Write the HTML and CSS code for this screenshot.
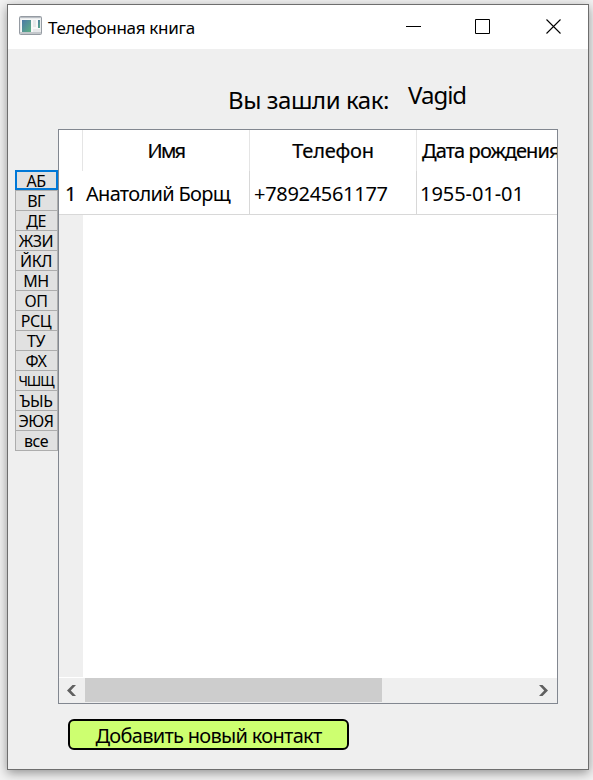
FILE: index.html
```html
<!DOCTYPE html>
<html lang="ru">
<head>
<meta charset="utf-8">
<title>Телефонная книга</title>
<link rel="stylesheet" href="styles.css">
</head>
<body>
<div class="window">
  <header class="titlebar">
    <svg class="app-icon" width="24" height="20" viewBox="0 0 24 20">
      <defs><linearGradient id="g" x1="0" y1="0" x2="1" y2="1"><stop offset="0" stop-color="#4b79a6"/><stop offset="1" stop-color="#5fb184"/></linearGradient></defs>
      <rect x=".5" y=".5" width="22" height="18" rx="1" fill="#e9ebec" stroke="#959ba2"/>
      <path d="M1 1.5h21" stroke="#b9bec4"/>
      <path d="M1 17h21" stroke="#c3c7cb" stroke-width="2"/>
      <rect x="2" y="3" width="19" height="13" fill="#f7f8f8"/>
      <rect x="3" y="4" width="9" height="12" fill="url(#g)"/>
      <rect x="14" y="4" width="3" height="7" fill="#e6e8ea"/>
      <rect x="19" y="4" width="2" height="8" fill="url(#g)"/>
      <rect x="14" y="13" width="7" height="3" fill="#e6e8ea"/>
    </svg>
    <h1 class="title"><span>Телефонная книга</span></h1>
    <div class="controls">
      <svg width="16" height="16" viewBox="0 0 16 16"><path d="M0 7.5h15" stroke="#000"/></svg>
      <svg width="16" height="16" viewBox="0 0 16 16"><path d="M.5.5h14v14H.5z" fill="none" stroke="#000"/></svg>
      <svg width="16" height="16" viewBox="0 0 16 16"><path d="M.5.5l14 14M14.5.5l-14 14" stroke="#000" stroke-width="1.1"/></svg>
    </div>
  </header>
  <div class="login"><span class="login-label">Вы зашли как:</span><span class="login-name">Vagid</span></div>
  <main class="content">
    <nav class="letters">
      <button class="active"><span>АБ</span></button>
      <button><span>ВГ</span></button>
      <button><span>ДЕ</span></button>
      <button><span>ЖЗИ</span></button>
      <button><span>ЙКЛ</span></button>
      <button><span>МН</span></button>
      <button><span>ОП</span></button>
      <button><span>РСЦ</span></button>
      <button><span>ТУ</span></button>
      <button><span>ФХ</span></button>
      <button class="tight"><span>ЧШЩ</span></button>
      <button><span>ЪЫЬ</span></button>
      <button><span>ЭЮЯ</span></button>
      <button><span>все</span></button>
    </nav>
    <section class="table">
      <div class="row head">
        <div class="num"></div>
        <div class="cell"><span class="h-name">Имя</span></div>
        <div class="cell"><span class="h-phone">Телефон</span></div>
        <div class="cell last"><span class="birth">Дата рождения</span></div>
      </div>
      <div class="row data">
        <div class="num"><span>1</span></div>
        <div class="cell"><span class="name">Анатолий Борщ</span></div>
        <div class="cell"><span class="phone">+78924561177</span></div>
        <div class="cell last"><span class="date">1955-01-01</span></div>
      </div>
      <div class="blank"></div>
      <div class="scrollbar">
        <svg class="arrow" width="26" height="25" viewBox="0 0 26 25"><path d="M13.500 7H17L11.800 12.500L17 18H13.500L8 12.500Z" fill="#606060"/></svg>
        <div class="track"><div class="thumb"></div></div>
        <svg class="arrow" width="26" height="25" viewBox="0 0 26 25"><path d="M11.500 7H8L13.200 12.500L8 18H11.500L17 12.500Z" fill="#606060"/></svg>
      </div>
    </section>
  </main>
  <button class="add"><span>Добавить новый контакт</span></button>
</div>
</body>
</html>
```
FILE: styles.css
```css
* { box-sizing: border-box; }
body {
  margin: 0;
  height: 780px;
  padding: 4px 4px 10px 7px;
  overflow: hidden;
  background: #f2f2f2;
  color: #000;
  font-family: "Noto Sans", sans-serif;
}
button { font-family: inherit; color: inherit; padding: 0; margin: 0; }
span { white-space: nowrap; }
.window {
  width: 582px;
  height: 766px;
  border: 1px solid #6e6e6e;
  background: #efefef;
  box-shadow: 0 3px 10px rgba(0, 0, 0, .4);
}
.titlebar {
  display: flex;
  height: 44px;
  padding: 0 26px 0 11px;
  background: #fff;
}
.app-icon { margin-top: 11px; flex: none; }
.title {
  margin: 11px 0 0 5px;
  font-size: 17px;
  font-weight: 400;
  line-height: 24px;
  letter-spacing: -.3px;
}
.controls { display: flex; margin: 14px 0 0 auto; }
.controls svg:nth-child(2) { margin: 0 55px 0 53px; }
.login {
  display: flex;
  height: 80px;
  padding: 29px 0 0 220px;
  font-size: 24px;
  line-height: 34px;
}
.login-label { width: 180px; margin-top: 5px; letter-spacing: -.42px; }
.login-name { letter-spacing: -1px; }
.content { display: flex; height: 575px; padding-left: 7px; }
.letters { display: flex; flex-direction: column; width: 43px; padding-top: 41px; }
.letters button {
  display: flex;
  justify-content: center;
  height: 20px;
  padding-right: 1px;
  border: 1px solid #adadad;
  border-bottom: 0;
  background: #e1e1e1;
  font-size: 16px;
  line-height: 20px;
  letter-spacing: -.5px;
}
.letters button:last-child { height: 21px; border-bottom: 1px solid #adadad; }
.letters .active { border: 2px solid #0078d7; line-height: 18px; }
.letters .tight { font-size: 14px; letter-spacing: -1.1px; line-height: 20px; }
.table {
  display: flex;
  flex-direction: column;
  width: 500px;
  border: 1px solid #828790;
  background: #fff;
  overflow: hidden;
}
.row { display: grid; grid-template-columns: 24px 167px 167px 141px; font-size: 20px; flex: none; }
.head { height: 41px; line-height: 42px; text-align: center; -webkit-text-stroke: .2px #000; }
.head .cell, .head .num { border-right: 1px solid #e5e5e5; }
.h-name { letter-spacing: -1.7px; }
.h-phone { letter-spacing: -.2px; }
.birth { letter-spacing: -.9px; }
.data { grid-template-rows: 43px; height: 44px; border-bottom: 1px solid #d8d8d8; line-height: 46px; }
.data .cell { padding-left: 4px; border-right: 1px solid #d8d8d8; }
.data .cell:nth-child(2), .data .last { padding-left: 3px; }
.data .num { padding-left: 6px; border-right: 1px solid #fff; -webkit-text-stroke: .2px #000; }
.name { letter-spacing: -.7px; }
.phone { letter-spacing: -.3px; }
.date { letter-spacing: -.05px; }
.row .last { border-right: 0; }
.last { overflow: hidden; text-align: left; }
.head .last { padding-left: 5px; }
.blank { flex: 1; width: 24px; background: #efefef; }
.scrollbar { display: flex; height: 26px; padding-top: 1px; background: #fff; flex: none; }
.arrow { background: #efefef; flex: none; }
.track { flex: 1; background: #efefef; }
.thumb { width: 297px; height: 24px; background: #cdcdcd; }
.add {
  display: flex;
  justify-content: center;
  width: 281px;
  height: 31px;
  margin: 15px 0 0 60px;
  border: 2px solid #000;
  border-radius: 6px;
  background: #cdff70;
  font-size: 20px;
  line-height: 30px;
  letter-spacing: -.7px;
}
```
